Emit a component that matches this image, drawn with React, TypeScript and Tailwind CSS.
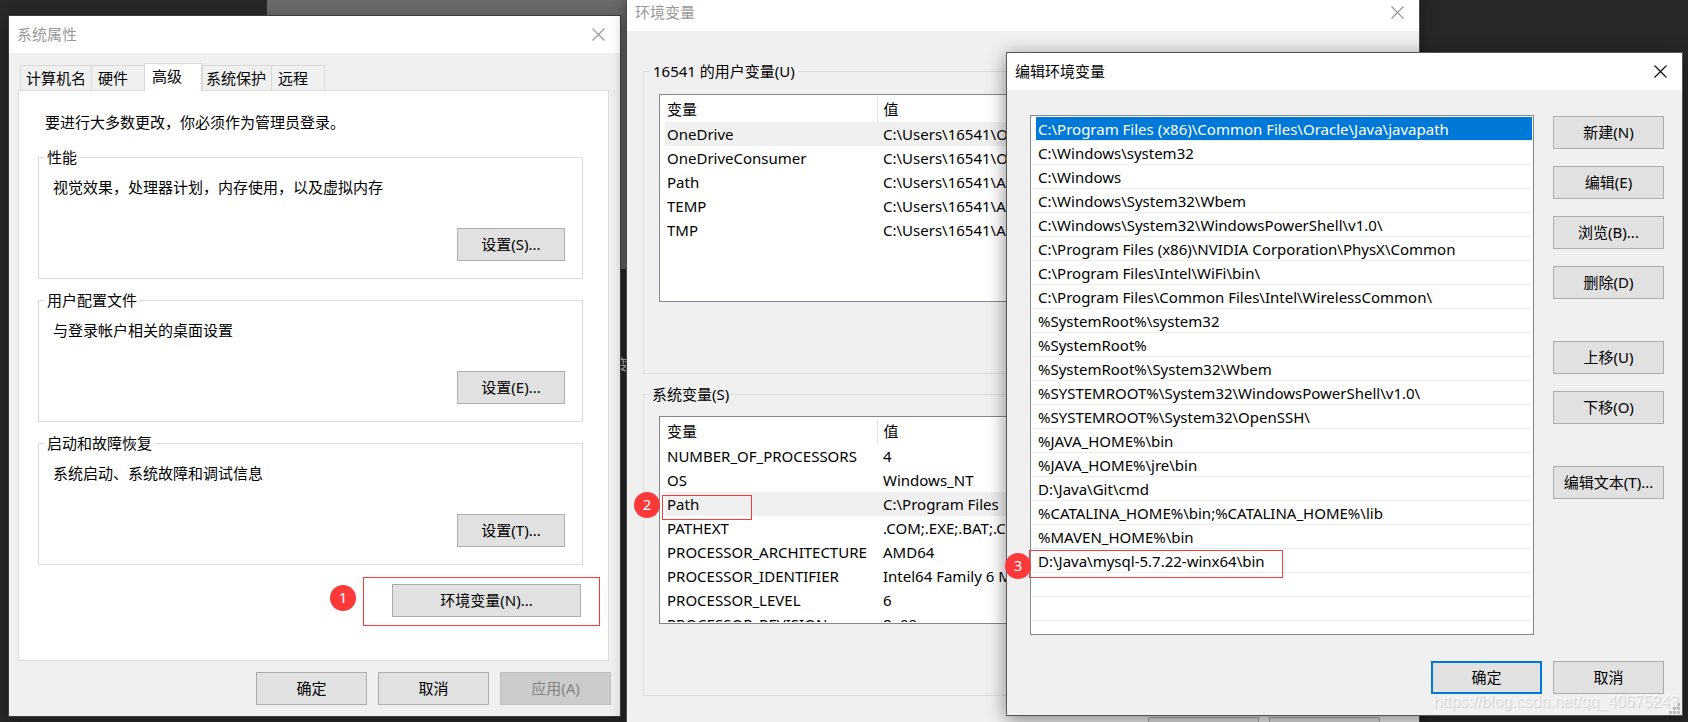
import React from 'react'
import clsx from 'clsx'

const tabs = [
  { label: '计算机名', className: 'w-[71px] px-[5px]' },
  { label: '硬件', className: 'w-[53px] px-[6px]' },
  { label: '高级', className: 'w-[58px] px-[7px]', active: true },
  { label: '系统保护', className: 'w-[69px] px-[3px]' },
  { label: '远程', className: 'w-[54px] border-r px-[6px]' },
]

const sections = [
  { title: '性能', text: '视觉效果，处理器计划，内存使用，以及虚拟内存', button: '设置(S)...' },
  { title: '用户配置文件', text: '与登录帐户相关的桌面设置', button: '设置(E)...' },
  { title: '启动和故障恢复', text: '系统启动、系统故障和调试信息', button: '设置(T)...' },
]

const userVars = [
  ['OneDrive', 'C:\\Users\\16541\\O'],
  ['OneDriveConsumer', 'C:\\Users\\16541\\O'],
  ['Path', 'C:\\Users\\16541\\A'],
  ['TEMP', 'C:\\Users\\16541\\A'],
  ['TMP', 'C:\\Users\\16541\\A'],
]

const systemVars = [
  ['NUMBER_OF_PROCESSORS', '4'],
  ['OS', 'Windows_NT'],
  ['Path', 'C:\\Program Files'],
  ['PATHEXT', '.COM;.EXE;.BAT;.C'],
  ['PROCESSOR_ARCHITECTURE', 'AMD64'],
  ['PROCESSOR_IDENTIFIER', 'Intel64 Family 6 M'],
  ['PROCESSOR_LEVEL', '6'],
  ['PROCESSOR_REVISION', '8e09'],
]

const paths = [
  'C:\\Program Files (x86)\\Common Files\\Oracle\\Java\\javapath',
  'C:\\Windows\\system32',
  'C:\\Windows',
  'C:\\Windows\\System32\\Wbem',
  'C:\\Windows\\System32\\WindowsPowerShell\\v1.0\\',
  'C:\\Program Files (x86)\\NVIDIA Corporation\\PhysX\\Common',
  'C:\\Program Files\\Intel\\WiFi\\bin\\',
  'C:\\Program Files\\Common Files\\Intel\\WirelessCommon\\',
  '%SystemRoot%\\system32',
  '%SystemRoot%',
  '%SystemRoot%\\System32\\Wbem',
  '%SYSTEMROOT%\\System32\\WindowsPowerShell\\v1.0\\',
  '%SYSTEMROOT%\\System32\\OpenSSH\\',
  '%JAVA_HOME%\\bin',
  '%JAVA_HOME%\\jre\\bin',
  'D:\\Java\\Git\\cmd',
  '%CATALINA_HOME%\\bin;%CATALINA_HOME%\\lib',
  '%MAVEN_HOME%\\bin',
  'D:\\Java\\mysql-5.7.22-winx64\\bin',
  '',
  '',
]

interface TitleBarProps {
  title: string
  active?: boolean
}

function TitleBar({ title, active }: TitleBarProps) {
  return (
    <div
      className={clsx(
        'flex h-[37px] items-center justify-between bg-white pr-[15px] pl-2',
        active ? 'text-black' : 'text-[#999999]'
      )}
    >
      <h2 className="pb-[2px]">{title}</h2>
      <button aria-label="关闭">
        <svg width="13" height="13" viewBox="0 0 13 13" stroke="currentColor" strokeWidth="1.1" fill="none">
          <path d="M0.5 0.5L12.5 12.5M12.5 0.5L0.5 12.5" />
        </svg>
      </button>
    </div>
  )
}

interface ButtonProps {
  children?: React.ReactNode
  label?: string
  className?: string
  primary?: boolean
  disabled?: boolean
}

function Button({ children, label, className = 'w-[111px]', primary, disabled }: ButtonProps) {
  return (
    <button
      disabled={disabled}
      aria-label={label}
      className={clsx(
        'flex h-[33px] items-center justify-center pb-[2px]',
        primary ? 'border-2 border-[#0078d7]' : 'border',
        disabled ? 'border-[#bfbfbf] bg-[#cccccc] text-[#838383]' : 'bg-[#e1e1e1] text-black',
        !primary && !disabled && 'border-[#adadad]',
        className
      )}
    >
      {children}
    </button>
  )
}

// Numbered step marker
function Badge({ n, className }: { n: number; className: string }) {
  return (
    <span
      className={clsx(
        'absolute flex size-[26px] justify-center rounded-full bg-[#fc3838] leading-6 text-white',
        className
      )}
    >
      {n}
    </span>
  )
}

function Outline({ className }: { className: string }) {
  return <span className={clsx('pointer-events-none absolute border border-[#f93a3a]', className)} />
}

function SystemProperties() {
  return (
    <section className="absolute left-2 top-[15px] w-[613px] border border-[#3c3c3c] bg-[#f0f0f0] shadow-[0_4px_14px_rgba(0,0,0,0.4)]">
      <TitleBar title="系统属性" />
      <div className="px-[9px] pt-[10px] pb-[11px]">
        <div role="tablist" className="flex items-end pl-[2px]">
          {tabs.map((tab) => (
            <button
              key={tab.label}
              role="tab"
              aria-selected={!!tab.active}
              className={clsx(
                'border-l border-t border-[#d9d9d9] text-left whitespace-nowrap',
                tab.active ? 'relative -mb-px h-7 border-r bg-white pb-[3px]' : 'h-[25px]',
                tab.className
              )}
            >
              {tab.label}
            </button>
          ))}
        </div>
        <div className="mr-[2px] flex flex-col gap-[11px] border border-[#dcdcdc] bg-white pt-[21px] pr-[25px] pb-[43px] pl-[19px]">
          <p className="mb-1 pl-[7px]">要进行大多数更改，你必须作为管理员登录。</p>
          {sections.map((s) => (
            <fieldset key={s.title} className="border border-[#dcdcdc]">
              <legend className="ml-[6px] px-[2px]">{s.title}</legend>
              <div className="flex flex-col pt-[10px] pr-[17px] pb-[17px] pl-[14px]">
                <p>{s.text}</p>
                <Button className="mt-[31px] w-[108px] self-end">{s.button}</Button>
              </div>
            </fieldset>
          ))}
          <div className="relative mt-[8px] mr-[2px] self-end">
            <Button className="w-[189px]">环境变量(N)...</Button>
            <Outline className="-top-[7px] -right-[19px] -bottom-[9px] -left-[29px]" />
            <Badge n={1} className="top-px -left-[62px]" />
          </div>
        </div>
        <div className="mt-[11px] flex justify-end gap-[11px]">
          <Button>确定</Button>
          <Button>取消</Button>
          <Button disabled>应用(A)</Button>
        </div>
      </div>
    </section>
  )
}

interface VariableTableProps {
  rows: string[][]
  selected: number
  marked?: boolean
}

function VariableTable({ rows, selected, marked }: VariableTableProps) {
  return (
    <div className="relative h-[208px] border border-[#828790] bg-white p-px pl-[5px]">
      <div className="h-full overflow-hidden">
        <table className="w-full table-fixed border-collapse text-left whitespace-nowrap">
          <thead>
            <tr className="h-[26px]">
              <th className="w-[212px] border-r border-[#e5e5e5] px-[2px] font-normal">变量</th>
              <th className="px-[6px] font-normal">值</th>
            </tr>
          </thead>
          <tbody>
            {rows.map(([name, value], i) => (
              <tr key={name} className={clsx('h-6', i === selected && 'bg-[#f0f0f0]')}>
                <td className="px-[2px]">{name}</td>
                <td className="overflow-hidden px-[6px]">{value}</td>
              </tr>
            ))}
          </tbody>
        </table>
      </div>
      {marked && (
        <>
          <Outline className="top-[78px] left-[2px] h-[25px] w-[90px]" />
          <Badge n={2} className="top-[75px] -left-[26px]" />
        </>
      )}
    </div>
  )
}

function EnvironmentVariables() {
  return (
    <section className="absolute -top-[7px] left-[626px] w-[794px] border border-[#4a4a4a] bg-[#f0f0f0] shadow-[0_4px_14px_rgba(0,0,0,0.4)]">
      <TitleBar title="环境变量" />
      <div className="px-4 pt-[30px] pb-4">
        <fieldset className="border border-[#dcdcdc]">
          <legend className="ml-[6px] px-[3px]">16541 的用户变量(U)</legend>
          <div className="px-[15px] pt-[13px] pb-[71px]">
            <VariableTable rows={userVars} selected={0} />
          </div>
        </fieldset>
        <fieldset className="mt-[10px] border border-[#dcdcdc]">
          <legend className="ml-[6px] px-[2px]">系统变量(S)</legend>
          <div className="px-[15px] pt-3 pb-[71px]">
            <VariableTable rows={systemVars} selected={2} marked />
          </div>
        </fieldset>
        <div className="mt-[21px] mr-[23px] flex justify-end gap-[10px]">
          <Button label="确定" />
          <Button label="取消" />
        </div>
      </div>
    </section>
  )
}

function EditVariable() {
  return (
    <section className="absolute top-[52px] left-[1006px] w-[677px] border border-[#555555] bg-[#f0f0f0] shadow-[0_4px_18px_rgba(0,0,0,0.45)]">
      <TitleBar title="编辑环境变量" active />
      <div className="flex gap-[19px] pt-[25px] pr-[18px] pl-[23px]">
        <div className="relative h-[520px] flex-1 border border-[#828790] bg-white p-px">
          <ul role="listbox" aria-label="路径">
            {paths.map((path, i) => (
              <li
                key={i}
                role="option"
                aria-selected={i === 0}
                className="h-6 border-b border-[#ededed] pl-1"
              >
                <div className={clsx('h-[23px] px-[2px] leading-[24px]', i === 0 && 'bg-[#0078d7] text-white')}>
                  {path}
                </div>
              </li>
            ))}
          </ul>
          <Outline className="top-[434px] -left-[2px] h-[28px] w-[254px]" />
          <Badge n={3} className="top-[437px] -left-[26px]" />
        </div>
        <div className="flex flex-col gap-[17px] pt-px">
          <Button>新建(N)</Button>
          <Button>编辑(E)</Button>
          <Button>浏览(B)...</Button>
          <Button>删除(D)</Button>
          <Button className="mt-[25px] w-[111px]">上移(U)</Button>
          <Button>下移(O)</Button>
          <Button className="mt-[25px] w-[111px]">编辑文本(T)...</Button>
        </div>
      </div>
      <div className="flex justify-end gap-[11px] pt-[26px] pr-[18px] pb-[21px]">
        <Button primary>确定</Button>
        <Button>取消</Button>
      </div>
      {/* Resize grip */}
      <svg className="absolute right-[2px] bottom-px" width="11" height="11" fill="#bfbfbf">
        <path d="M8 0h3v3h-3zM4 4h3v3h-3zM8 4h3v3h-3zM0 8h3v3h-3zM4 8h3v3h-3zM8 8h3v3h-3z" />
      </svg>
    </section>
  )
}

export default function App() {
  return (
    <main className="relative h-screen min-h-[722px] overflow-hidden bg-[#282828] font-['Noto_Sans','Noto_Sans_CJK_SC',sans-serif] text-[15px] leading-5 text-black">
      {/* Editor window left open behind the dialogs */}
      <div className="absolute top-0 left-[267px] h-[269px] w-[400px] bg-[#6a6a6a]" />
      <span className="absolute top-[354px] left-[614px] text-[#cccccc]">变</span>
      <SystemProperties />
      <EnvironmentVariables />
      <EditVariable />
      <span className="absolute right-[9px] bottom-2 font-['Liberation_Sans',sans-serif] text-base text-white/60 [text-shadow:1px_1px_1px_rgba(0,0,0,0.15)]">
        https://blog.csdn.net/qq_40675243
      </span>
    </main>
  )
}
